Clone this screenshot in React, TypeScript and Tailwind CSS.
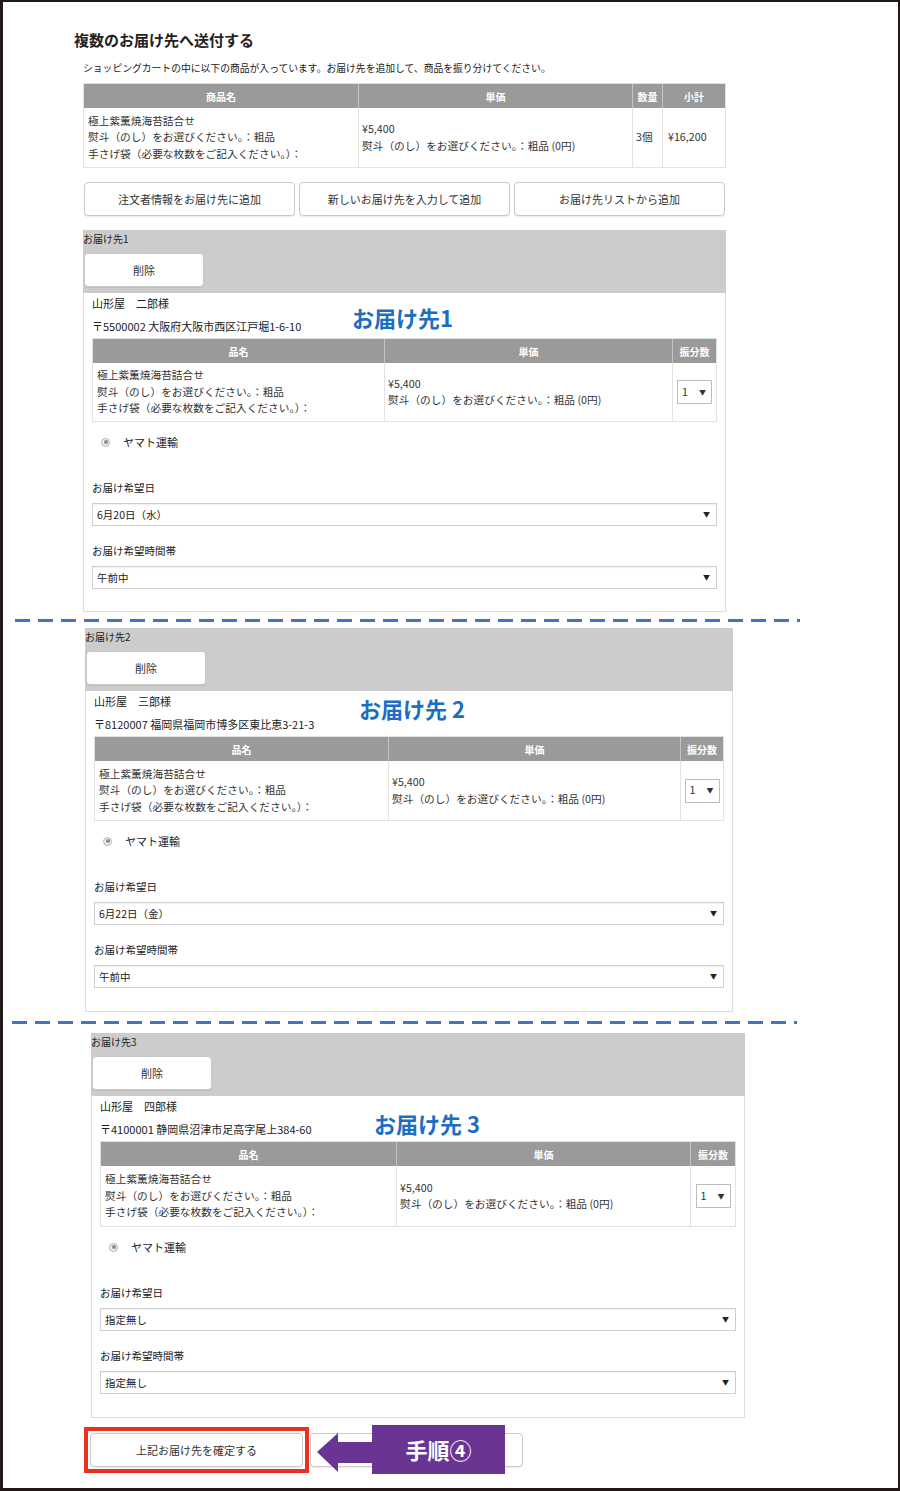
import React from 'react';

interface Dest {
  label: string;
  name: string;
  addr: string;
  date: string;
  time: string;
  annot: string;
  wrap: string;
  annotPos: string;
  cols: string;
  rowH: string;
  pb: string;
}

const dests: Dest[] = [
  {
    label: 'お届け先1',
    name: '山形屋　二郎様',
    addr: '〒5500002 大阪府大阪市西区江戸堀1-6-10',
    date: '6月20日（水）',
    time: '午前中',
    annot: 'お届け先1',
    wrap: 'mt-[14px] ml-[80px] w-[643px]',
    annotPos: 'left-[268px] top-[9px]',
    cols: 'grid-cols-[292px_288px_1fr]',
    rowH: 'h-[58px]',
    pb: 'pb-[22px]',
  },
  {
    label: 'お届け先2',
    name: '山形屋　三郎様',
    addr: '〒8120007 福岡県福岡市博多区東比恵3-21-3',
    date: '6月22日（金）',
    time: '午前中',
    annot: 'お届け先 2',
    wrap: 'mt-[6px] ml-[82px] w-[648px]',
    annotPos: 'left-[273px] top-[2px]',
    cols: 'grid-cols-[294px_292px_1fr]',
    rowH: 'h-[59px]',
    pb: 'pb-[23px]',
  },
  {
    label: 'お届け先3',
    name: '山形屋　四郎様',
    addr: '〒4100001 静岡県沼津市足高字尾上384-60',
    date: '指定無し',
    time: '指定無し',
    annot: 'お届け先 3',
    wrap: 'mt-[9px] ml-[88px] w-[654px]',
    annotPos: 'left-[282px] top-[12px]',
    cols: 'grid-cols-[296px_294px_1fr]',
    rowH: 'h-[60px]',
    pb: 'pb-[23px]',
  },
];

const itemLines = [
  '極上紫薫焼海苔詰合せ',
  '熨斗（のし）をお選びください。：粗品',
  '手さげ袋（必要な枚数をご記入ください。）：',
];

function Btn({ children, className }: { children: React.ReactNode; className: string }) {
  return (
    <div
      className={`flex items-center justify-center rounded-[4px] border border-[#c9c9c9] bg-white text-[11px] text-[#333] shadow-[0_1px_1px_rgba(0,0,0,0.08)] ${className}`}
    >
      {children}
    </div>
  );
}

function Select({ value }: { value: string }) {
  return (
    <div className="mt-[7px] flex h-[23px] items-center justify-between border border-[#cfcfcf] bg-white pl-[4px] pr-[6px] text-[10.5px] text-[#222] shadow-[inset_0_1px_1px_rgba(0,0,0,0.06)]">
      <span>{value}</span>
      <span className="text-[7px] text-[#222]">▼</span>
    </div>
  );
}

function Dashed({ className }: { className: string }) {
  return (
    <div
      className={`h-[3px] bg-[repeating-linear-gradient(90deg,#4472c4_0_15px,transparent_15px_23px)] ${className}`}
    />
  );
}

function Destination({ d }: { d: Dest }) {
  return (
    <div className={d.wrap}>
      <div className="h-[63px] bg-[#cccccc]">
        <div className="pt-[2px] text-[10px] leading-[14px] text-[#222]">{d.label}</div>
        <Btn className="ml-[1px] mt-[7px] h-[34px] w-[120px]">削除</Btn>
      </div>
      <div className={`relative border-x border-b border-[#dddddd] px-[8px] pt-[2px] ${d.pb}`}>
        <div className="text-[11px] leading-[16px] text-[#222]">{d.name}</div>
        <div className="mt-[7px] text-[11px] leading-[16px] text-[#222]">{d.addr}</div>
        <div className={`absolute text-[22px] font-bold leading-[30px] text-[#1b6ec2] ${d.annotPos}`}>
          {d.annot}
        </div>

        <div className="mt-[4px] border border-[#e2e2e2]">
          <div className={`grid h-[24px] bg-[#9a9a9a] text-[10px] font-bold text-white ${d.cols}`}>
            <div className="flex items-center justify-center border-r border-[#c4c4c4]">品名</div>
            <div className="flex items-center justify-center border-r border-[#c4c4c4]">単価</div>
            <div className="flex items-center justify-center">振分数</div>
          </div>
          <div className={`grid text-[10.7px] leading-[16.5px] text-[#333] ${d.cols} ${d.rowH}`}>
            <div className="flex flex-col justify-center border-r border-[#e2e2e2] pl-[4px]">
              {itemLines.map((l) => (
                <div key={l}>{l}</div>
              ))}
            </div>
            <div className="flex flex-col justify-center border-r border-[#e2e2e2] pl-[3px]">
              <div>¥5,400</div>
              <div>熨斗（のし）をお選びください。：粗品 (0円)</div>
            </div>
            <div className="flex items-center justify-center">
              <div className="flex h-[24px] w-[35px] items-center justify-between border border-[#bdbdbd] bg-white pl-[4px] pr-[5px]">
                <span>1</span>
                <span className="text-[7px]">▼</span>
              </div>
            </div>
          </div>
        </div>

        <div className="mt-[12px] flex h-[16px] items-center text-[11px] text-[#222]">
          <span className="ml-[9px] flex h-[9px] w-[9px] items-center justify-center rounded-full border border-[#b5b5b5] bg-[#eeeeee]">
            <span className="h-[4px] w-[4px] rounded-full bg-[#8a8a8a]" />
          </span>
          <span className="ml-[13px]">ヤマト運輸</span>
        </div>

        <div className="mt-[30px] text-[10.5px] leading-[16px] text-[#222]">お届け希望日</div>
        <Select value={d.date} />
        <div className="mt-[17px] text-[10.5px] leading-[16px] text-[#222]">お届け希望時間帯</div>
        <Select value={d.time} />
      </div>
    </div>
  );
}

export default function App() {
  return (
    <div className="relative h-[1491px] w-[900px] overflow-hidden border-b-[3px] border-l-[3px] border-r-2 border-t-2 border-[#231815] bg-white font-['Noto_Sans_CJK_JP','Noto_Sans',sans-serif] text-[#333]">
      <div className="ml-[71px] mt-[28px] text-[15px] font-bold leading-[20px] text-[#222]">
        複数のお届け先へ送付する
      </div>
      <div className="ml-[80px] mt-[11px] text-[9.8px] leading-[14px] text-[#222]">
        ショッピングカートの中に以下の商品が入っています。お届け先を追加して、商品を振り分けてください。
      </div>

      <div className="ml-[80px] mt-[8px] w-[643px] border border-[#e2e2e2]">
        <div className="grid h-[24px] grid-cols-[275px_274px_30px_1fr] bg-[#9a9a9a] text-[10px] font-bold text-white">
          <div className="flex items-center justify-center border-r border-[#c4c4c4]">商品名</div>
          <div className="flex items-center justify-center border-r border-[#c4c4c4]">単価</div>
          <div className="flex items-center justify-center border-r border-[#c4c4c4]">数量</div>
          <div className="flex items-center justify-center">小計</div>
        </div>
        <div className="grid h-[59px] grid-cols-[275px_274px_30px_1fr] text-[10.7px] leading-[16.5px] text-[#333]">
          <div className="flex flex-col justify-center border-r border-[#e2e2e2] pl-[4px]">
            {itemLines.map((l) => (
              <div key={l}>{l}</div>
            ))}
          </div>
          <div className="flex flex-col justify-center border-r border-[#e2e2e2] pl-[3px]">
            <div>¥5,400</div>
            <div>熨斗（のし）をお選びください。：粗品 (0円)</div>
          </div>
          <div className="flex items-center border-r border-[#e2e2e2] pl-[3px]">3個</div>
          <div className="flex items-center pl-[5px]">¥16,200</div>
        </div>
      </div>

      <div className="ml-[81px] mt-[14px] flex gap-[4px]">
        <Btn className="h-[34px] w-[211px]">注文者情報をお届け先に追加</Btn>
        <Btn className="h-[34px] w-[211px]">新しいお届け先を入力して追加</Btn>
        <Btn className="h-[34px] w-[211px]">お届け先リストから追加</Btn>
      </div>

      <Destination d={dests[0]} />
      <Dashed className="ml-[12px] mt-[7px] w-[785px]" />
      <Destination d={dests[1]} />
      <Dashed className="ml-[9px] mt-[9px] w-[785px]" />
      <Destination d={dests[2]} />

      <div className="ml-[81px] mt-[9px] flex items-start">
        <div className="border-[4px] border-[#e8321e] p-[2px]">
          <Btn className="h-[34px] w-[213px]">上記お届け先を確定する</Btn>
        </div>
        <Btn className="ml-[1px] mt-[6px] h-[34px] w-[213px]">{''}</Btn>
      </div>

      <div className="absolute left-[314px] top-[1423px] flex items-center">
        <svg width="55" height="49" viewBox="0 0 55 49">
          <polygon points="0,27 21,8 21,17 55,17 55,38 21,38 21,47" fill="#6a3592" />
        </svg>
        <div className="flex h-[49px] w-[133px] items-center justify-center bg-[#6a3592] text-[22px] font-bold text-white">
          手順④
        </div>
      </div>
    </div>
  );
}
